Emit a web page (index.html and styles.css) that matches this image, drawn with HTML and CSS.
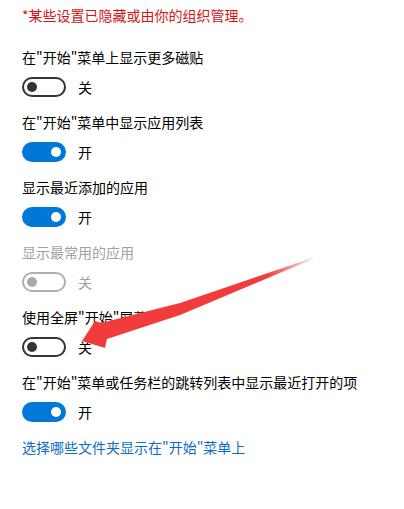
FILE: index.html
```html
<!DOCTYPE html>
<html lang="zh-CN">
<head>
  <meta charset="UTF-8" />
  <meta name="viewport" content="width=device-width, initial-scale=1.0" />
  <title>开始</title>
  <link rel="stylesheet" href="styles.css">
</head>
<body>
  <p class="notice">*某些设置已隐藏或由你的组织管理。</p>

  <div class="setting">
    <div class="label">在"开始"菜单上显示更多磁贴</div>
    <div class="switch-row"><span class="switch"></span><span class="state">关</span></div>
  </div>

  <div class="setting">
    <div class="label">在"开始"菜单中显示应用列表</div>
    <div class="switch-row"><span class="switch on"></span><span class="state">开</span></div>
  </div>

  <div class="setting">
    <div class="label">显示最近添加的应用</div>
    <div class="switch-row"><span class="switch on"></span><span class="state">开</span></div>
  </div>

  <div class="setting disabled">
    <div class="label">显示最常用的应用</div>
    <div class="switch-row"><span class="switch"></span><span class="state">关</span></div>
  </div>

  <div class="setting">
    <div class="label">使用全屏"开始"屏幕</div>
    <div class="switch-row"><span class="switch"></span><span class="state">关</span></div>
  </div>

  <div class="setting">
    <div class="label">在"开始"菜单或任务栏的跳转列表中显示最近打开的项</div>
    <div class="switch-row"><span class="switch on"></span><span class="state">开</span></div>
  </div>

  <a class="link" href="#">选择哪些文件夹显示在"开始"菜单上</a>

  <!-- annotation arrow drawn over the page -->
  <svg class="arrow" width="404" height="509" viewBox="0 0 404 509">
    <defs>
      <linearGradient id="fade" x1="82" y1="341" x2="313" y2="259" gradientUnits="userSpaceOnUse">
        <stop offset="0" stop-color="#f23c3c" />
        <stop offset="0.8" stop-color="#f23c3c" />
        <stop offset="1" stop-color="#f23c3c" stop-opacity="0.15" />
      </linearGradient>
    </defs>
    <polygon fill="url(#fade)" points="82,341 105,348 107,339 180,315 313,259 312,258 180,303 101,323 95,321" />
  </svg>
</body>
</html>
```

FILE: styles.css
```css
body {
  margin: 0;
  padding: 5px 22px 0;
  font-family: "Noto Sans CJK SC", sans-serif;
  font-size: 14px;
  line-height: 20px;
  color: #000;
  background: #fff;
}
.notice {
  margin: 0 0 22px;
  color: #d41414;
}
.setting {
  margin-bottom: 15px;
}
.label {
  margin-bottom: 10px;
}
.switch-row {
  display: flex;
  align-items: center;
  gap: 12px;
  height: 20px;
}
.switch {
  box-sizing: border-box;
  display: flex;
  align-items: center;
  width: 44px;
  height: 20px;
  padding: 0 3px;
  border: 2px solid #333;
  border-radius: 10px;
}
.switch::after {
  content: "";
  width: 10px;
  height: 10px;
  border-radius: 50%;
  background: #333;
}
.switch.on {
  justify-content: flex-end;
  background: #0078d7;
  border-color: #0078d7;
}
.switch.on::after {
  background: #fff;
}
.disabled .label,
.disabled .state {
  color: #a0a0a0;
}
.disabled .switch {
  border-color: #b0b0b0;
}
.disabled .switch::after {
  background: #a8a8a8;
}
.link {
  color: #0a6cc7;
  text-decoration: none;
}
.arrow {
  position: absolute;
  left: 0;
  top: 0;
  pointer-events: none;
}
```
